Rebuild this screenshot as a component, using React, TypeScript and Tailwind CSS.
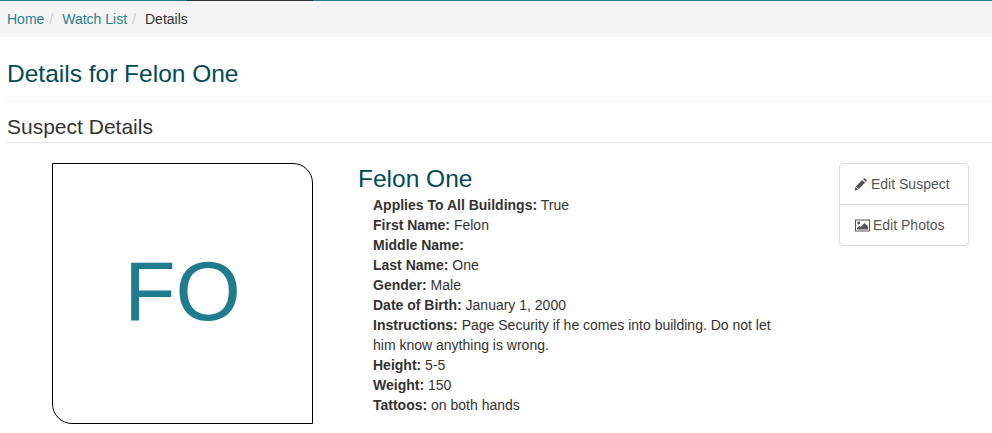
const details = [
  { label: "Applies To All Buildings:", value: "True" },
  { label: "First Name:", value: "Felon" },
  { label: "Middle Name:", value: "" },
  { label: "Last Name:", value: "One" },
  { label: "Gender:", value: "Male" },
  { label: "Date of Birth:", value: "January 1, 2000" },
  { label: "Instructions:", value: "Page Security if he comes into building. Do not let him know anything is wrong." },
  { label: "Height:", value: "5-5" },
  { label: "Weight:", value: "150" },
  { label: "Tattoos:", value: "on both hands" },
]

function PencilIcon() {
  return (
    <svg className="w-[13px] h-[13px]" viewBox="0 0 13 13">
      <path d="M0.5 12.5l0.8-3.6 2.8 2.8z" fill="#555" />
      <path d="M1.9 8.2L8.2 1.9l2.9 2.9-6.3 6.3z" fill="#555" />
      <path d="M9 1.1l0.6-0.6a1 1 0 0 1 1.3 0l1.6 1.6a1 1 0 0 1 0 1.3l-0.6 0.6z" fill="#555" />
    </svg>
  )
}

function PictureIcon() {
  return (
    <svg className="w-[15px] h-[13px]" viewBox="0 0 15 13">
      <rect x="0.5" y="1" width="14" height="11" fill="none" stroke="#555" />
      <circle cx="3.6" cy="4" r="1.4" fill="#555" />
      <path d="M2 10.5V9l2.4-2.2 1.4 1.3L9.6 4l3.4 3.4v3.1z" fill="#555" />
    </svg>
  )
}

export default function App() {
  return (
    <div className="min-h-screen bg-white font-['Liberation_Sans',Arial,sans-serif] text-sm text-[#333] overflow-hidden">
      {/* top loading stripe */}
      <div className="flex h-px">
        <div className="w-[187px] bg-[#1f7c8f]" />
        <div className="w-[126px] bg-[#333]" />
        <div className="flex-1 bg-[#1f7c8f]" />
      </div>

      <div className="flex items-center h-9 bg-[#f5f5f5] px-[7px] leading-5">
        <a className="text-[#2a7f91]">Home</a>
        <span className="text-[#ccc] pl-[5px] pr-[9px]">/</span>
        <a className="text-[#2a7f91]">Watch List</a>
        <span className="text-[#ccc] pl-[5px] pr-[9px]">/</span>
        <span>Details</span>
      </div>

      <div className="pl-[7px]">
        <h1 className="text-[24.5px] leading-[26px] text-[#004b5a] pt-6 pb-[14px] border-b border-[#eee]">Details for Felon One</h1>
        <h2 className="text-[21px] leading-[22px] pt-[14px] pb-[4px] border-b border-[#e5e5e5]">Suspect Details</h2>
      </div>

      <div className="flex items-start pt-5">
        <div className="ml-[52px] w-[261px] h-[261px] shrink-0 flex items-center justify-center pb-[5px] border border-black rounded-tr-[20px] rounded-bl-[20px] text-[84px] leading-none text-[#1f7c8f]">
          FO
        </div>

        <div className="ml-[45px] w-[420px] shrink-0">
          <div className="text-[24.5px] leading-[26px] pt-[3px] pb-[3px] text-[#004b5a]">Felon One</div>
          <div className="pl-[15px] leading-5">
            {details.map((d) => (
              <div key={d.label}>
                <b>{d.label}</b> {d.value}
              </div>
            ))}
          </div>
        </div>

        <div className="ml-[61px] w-[130px] shrink-0 border border-[#ddd] rounded text-[#555]">
          <div className="flex items-center gap-1 h-[41px] pl-[14px] border-b border-[#ddd]">
            <PencilIcon />
            Edit Suspect
          </div>
          <div className="flex items-center gap-[3px] h-10 pl-[15px]">
            <PictureIcon />
            Edit Photos
          </div>
        </div>
      </div>
    </div>
  )
}
